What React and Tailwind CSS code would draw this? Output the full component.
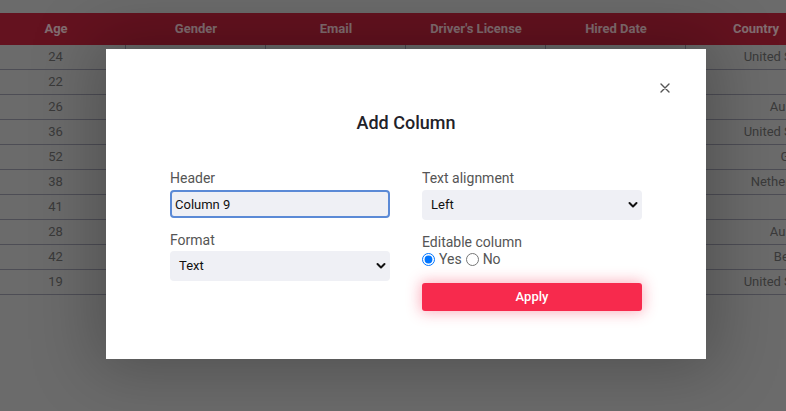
import React from "react";

const rows = [
  ["24", "Male", "john.doe@example.com", "Yes", "2018-04-12", "United States"],
  ["22", "Female", "anna.rossi@example.com", "No", "2020-09-01", "Italy"],
  ["26", "Male", "liam.smith@example.com", "Yes", "2019-02-17", "Australia"],
  ["36", "Female", "emma.brown@example.com", "Yes", "2015-06-23", "United States"],
  ["52", "Male", "nikos.papas@example.com", "Yes", "2010-11-30", "Greece"],
  ["38", "Female", "sanne.visser@example.com", "No", "2016-03-08", "Netherlands"],
  ["41", "Male", "diego.soto@example.com", "Yes", "2014-08-14", "Chile"],
  ["28", "Female", "olivia.jones@example.com", "Yes", "2021-01-05", "Australia"],
  ["42", "Male", "lucas.peeters@example.com", "No", "2013-10-19", "Belgium"],
  ["19", "Female", "mia.wilson@example.com", "No", "2023-05-02", "United States"],
];

const headers = ["Age", "Gender", "Email", "Driver's License", "Hired Date", "Country"];

function Chevron() {
  return (
    <svg width="10" height="8" viewBox="0 0 10 8" className="shrink-0">
      <polyline points="1.5,2 5,5.5 8.5,2" fill="none" stroke="#111" strokeWidth="2" strokeLinecap="round" strokeLinejoin="round" />
    </svg>
  );
}

function FakeSelect({ value, h }) {
  return (
    <div className={`flex items-center justify-between rounded-[4px] bg-[#eff0f5] pl-[9px] pr-[4px] text-[13px] text-[#111] ${h}`}>
      <span>{value}</span>
      <Chevron />
    </div>
  );
}

export default function App() {
  return (
    <div className="relative h-[411px] w-full overflow-hidden bg-[#c4c4c4] font-['Roboto',sans-serif]">
      {/* underlying table */}
      <div className="pt-[13px]">
        <div className="ml-[-14px] w-[840px]">
          <div className="grid h-[32px] grid-cols-[repeat(6,140px)] items-center bg-[#b6213a] text-[13px] font-bold text-white/75">
            {headers.map((h) => (
              <div key={h} className="text-center">{h}</div>
            ))}
          </div>
          {rows.map((r, i) => (
            <div key={i} className="grid h-[25px] grid-cols-[repeat(6,140px)] border-b border-[#8c8c9c] text-[13px] text-[#6a6a6a]">
              {r.map((c, j) => (
                <div
                  key={j}
                  className={`flex items-center border-r border-[#8c8c9c] ${j === 5 ? "justify-end pr-[4px]" : "justify-center"}`}
                >
                  {c}
                </div>
              ))}
            </div>
          ))}
        </div>
      </div>

      {/* overlay */}
      <div className="absolute inset-0 bg-black/45">
        <div className="absolute left-[106px] top-[49px] h-[310px] w-[600px] bg-white shadow-[0_0_60px_10px_rgba(0,0,0,0.25)]">
          <button className="absolute right-[36px] top-[34px] flex h-[10px] w-[10px] items-center justify-center">
            <svg width="10" height="10" viewBox="0 0 10 10">
              <path d="M1 1 L9 9 M9 1 L1 9" stroke="#555" strokeWidth="1.4" strokeLinecap="round" />
            </svg>
          </button>
          <div className="pt-[62px]">
            <h2 className="h-[24px] text-center text-[18px] font-medium leading-[24px] text-[#1f2229]">Add Column</h2>
            <div className="mt-[33px] grid grid-cols-2 gap-x-[32px] px-[64px] text-[14px] text-[#555]">
              <div className="flex flex-col">
                <label className="h-[20px] leading-[20px]">Header</label>
                <input
                  readOnly
                  value="Column 9"
                  className="mt-[2px] h-[28px] rounded-[4px] border-2 border-[#5b8ad6] bg-[#eff0f5] px-[3px] text-[13px] text-[#111] outline-none"
                />
                <label className="mt-[12px] h-[20px] leading-[20px]">Format</label>
                <div className="mt-[1px]">
                  <FakeSelect value="Text" h="h-[30px]" />
                </div>
              </div>
              <div className="flex flex-col">
                <label className="h-[20px] leading-[20px]">Text alignment</label>
                <div className="mt-[2px]">
                  <FakeSelect value="Left" h="h-[30px]" />
                </div>
                <label className="mt-[12px] h-[20px] leading-[20px]">Editable column</label>
                <div className="flex h-[15px] items-center">
                  <input type="radio" name="ed" defaultChecked className="m-0 h-[13px] w-[13px]" />
                  <span className="ml-[4px]">Yes</span>
                  <input type="radio" name="ed" className="m-0 ml-[4px] h-[13px] w-[13px]" />
                  <span className="ml-[4px]">No</span>
                </div>
                <button className="mt-[16px] h-[28px] rounded-[3px] bg-[#f72a4d] text-[13px] font-medium text-white shadow-[0_0_14px_2px_rgba(247,42,77,0.35)]">
                  Apply
                </button>
              </div>
            </div>
          </div>
        </div>
      </div>
    </div>
  );
}
